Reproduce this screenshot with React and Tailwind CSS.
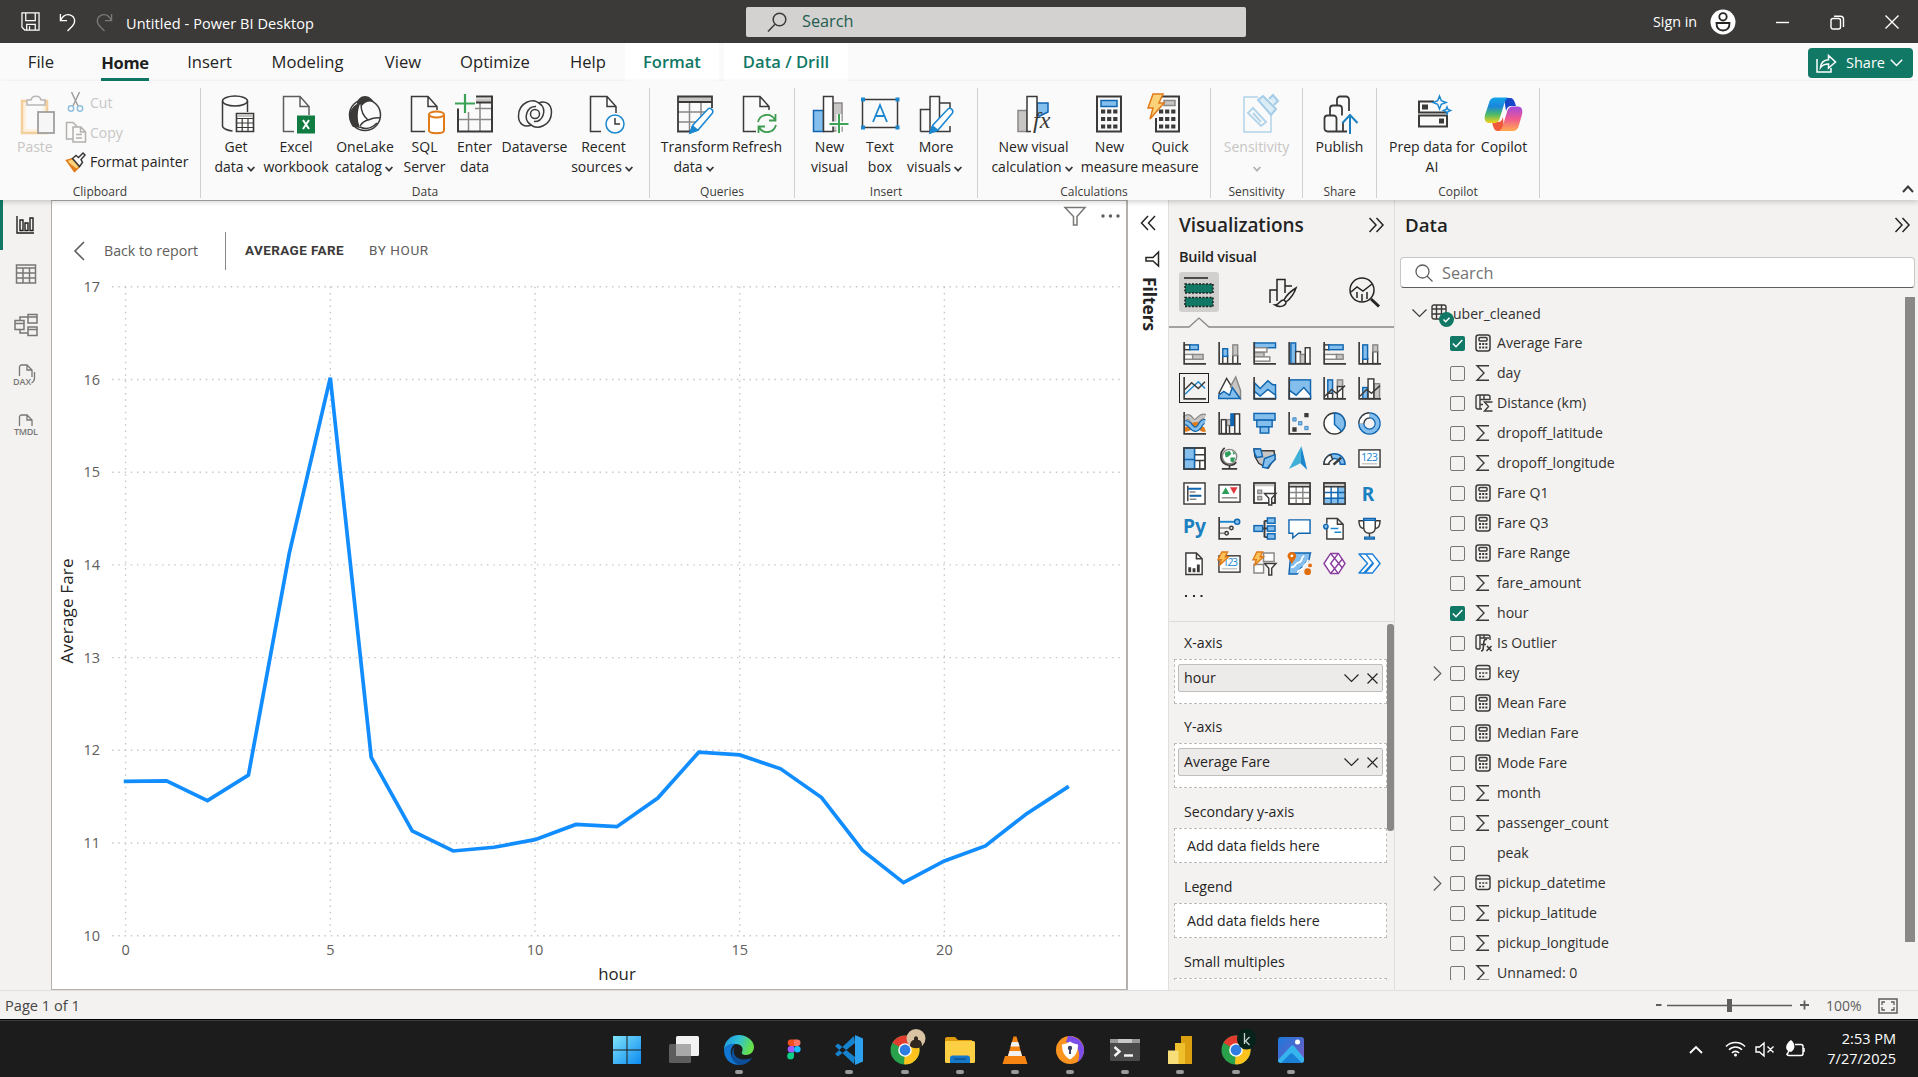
import React from "react";

const K = "#3b3a39";
const B = "#1066b0";
const F = "#83beec";
const G = "#c8c6c4";
const GS = "#8a8886";

function Svg({ w, h, vb, children, className = "", fill = "none", stroke = K, sw = 1.5 }) {
  return (
    <svg width={w} height={h} viewBox={vb || `0 0 ${w} ${h}`} fill={fill} stroke={stroke} strokeWidth={sw} className={`shrink-0 overflow-visible ${className}`}>
      {children}
    </svg>
  );
}

/* ---------- Title bar ---------- */
function TitleBar() {
  return (
    <div className="flex h-[43px] items-center bg-[#3b3a39] text-white">
      <div className="flex w-[746px] items-center">
        <Svg w={19} h={19} vb="0 0 20 20" stroke="#fff" sw={1.3} className="ml-[21px]">
          <path d="M1 1h18v18H4l-3-3zM5 1v8h10V1M6 19v-6h9v6M9 15v4" />
        </Svg>
        <Svg w={17} h={19} vb="0 0 18 20" stroke="#fff" sw={1.4} className="ml-[19px]">
          <path d="M1.500 2v7h7M1.500 9C4 4 8 2 11.500 3c6 2 6.500 8 2.500 12l-5 5" />
        </Svg>
        <Svg w={17} h={19} vb="0 0 18 20" stroke="#7b7977" sw={1.4} className="ml-[20px]">
          <path d="M16.500 2v7h-7M16.500 9C14 4 10 2 6.500 3c-6 2-6.500 8-2.500 12l5 5" />
        </Svg>
        <span className="mt-[5px] ml-[13px] text-[14.500px] tracking-[0.005em] whitespace-nowrap">Untitled - Power BI Desktop</span>
      </div>
      <div className="flex h-[30px] w-[500px] items-center rounded-[2px] bg-[#d3d2d0]">
        <Svg w={20} h={20} stroke={K} sw={1.5} className="ml-[21px]">
          <circle cx="12.500" cy="7.500" r="6.300" />
          <path d="M8 12.200L1 19.500" />
        </Svg>
        <span className="ml-[15px] text-[16.300px] text-[#235c4f]">Search</span>
      </div>
      <span className="ml-[407px] w-[46px] text-[14.300px] whitespace-nowrap">Sign in</span>
      <Svg w={26} h={26} stroke="#252423" sw={1.8} className="ml-[11px]">
        <circle cx="13" cy="13" r="12.500" fill="#fff" stroke="none" />
        <circle cx="13" cy="7.800" r="3.700" />
        <path d="M6.500 14h13c0 5-2.500 7.500-6.500 7.500S6.500 19 6.500 14z" />
      </Svg>
      <Svg w={14} h={14} stroke="#fff" sw={1.4} className="ml-[40px]">
        <path d="M0 7.500h13" />
      </Svg>
      <Svg w={15} h={15} stroke="#fff" sw={1.4} className="mt-[1px] ml-[40px]">
        <rect x="1" y="3.500" width="9.500" height="10.500" rx="2" />
        <path d="M4 1.200h6.500a3 3 0 0 1 3 3V12" />
      </Svg>
      <Svg w={14} h={14} stroke="#fff" sw={1.4} className="mt-[1px] ml-[40px]">
        <path d="M.5.500l13 13M13.500.500l-13 13" />
      </Svg>
    </div>
  );
}

/* ---------- Tabs ---------- */
function Tab({ w, children, active }) {
  return (
    <div className={`flex h-[38px] items-center justify-center ${w}`}>
      <span
        className={
          active
            ? "h-[38px] border-b-[3px] border-[#117865] pt-[1px] text-[16.500px] leading-[38px] font-bold tracking-[-0.02em] text-[#201f1e]"
            : "pt-[1px] text-[16.600px] text-[#252423]"
        }
      >
        {children}
      </span>
    </div>
  );
}

function Tabs() {
  return (
    <div className="flex h-[38px] bg-[#fafafa] pl-[3px]">
      <Tab w="w-[76px]">File</Tab>
      <Tab w="w-[92px]" active>Home</Tab>
      <Tab w="w-[77px]">Insert</Tab>
      <Tab w="w-[119px]">Modeling</Tab>
      <Tab w="w-[72px]">View</Tab>
      <Tab w="w-[112px]">Optimize</Tab>
      <Tab w="w-[74px]">Help</Tab>
      <div className="flex w-[94px] items-center justify-center bg-white pt-[1px] text-[16.500px] font-semibold text-[#117865]">Format</div>
      <div className="ml-[5px] flex w-[124px] items-center justify-center bg-white pt-[1px] text-[16.600px] font-semibold whitespace-nowrap text-[#117865]">
        Data / Drill
      </div>
      <div className="mt-[5px] mr-[5px] ml-auto flex h-[30px] w-[105px] items-center rounded-[4px] bg-[#117865] text-[14.500px] text-white">
        <Svg w={21} h={20} stroke="#fff" sw={1.5} className="ml-[8px]">
          <path d="M1 6v13h14v-4M4.500 14.500c.5-5 3-7.500 8-7.700V2.500l7 6.500-7 6V11c-4 0-6 .8-8 3.500z" />
        </Svg>
        <span className="ml-[9px]">Share</span>
        <Svg w={13} h={8} stroke="#fff" sw={1.500} className="ml-[5px]">
          <path d="M.8.800l5.700 5.700L12.200.800" />
        </Svg>
      </div>
    </div>
  );
}

/* ---------- Ribbon icons (40 x 40) ---------- */
const Pencil = ({ dx = 0, dy = 0 }) => (
  <g transform={`translate(${dx} ${dy})`}>
    <path d="M2 27l3-8L20 3c2-2 6 1 4.500 4L10 24z" fill="#fff" stroke="#1b87d0" />
    <path d="M2 27l2.500-7 5 4z" fill="#1b87d0" stroke="#1b87d0" />
  </g>
);

const ribbonIcons = {
  getData: (
    <>
      <ellipse cx="16" cy="7" rx="12.500" ry="5" />
      <path d="M3.500 7v25c0 2.500 5 4.500 10 5M28.500 7v11" />
      <path d="M17.500 19.500h17v18h-17z" fill="#fff" />
      <path d="M17.500 21.500h17" stroke={G} strokeWidth="3" />
      <path d="M17.500 24.500h17M17.500 29h17M17.500 33.500h17M23.200 24v13.500M29 24v13.500M17.500 19.500h17v18h-17z" strokeWidth="1.200" />
    </>
  ),
  excel: (
    <>
      <path d="M17 37.500H6.500v-35H23l9 10V21M23 2.500v10h9" stroke="#605e5c" />
      <rect x="20" y="21.500" width="18" height="18" fill="#107c41" stroke="none" />
      <path d="M26 26l6 9M32 26l-6 9" stroke="#fff" strokeWidth="2" />
    </>
  ),
  onelake: (
    <>
      <circle cx="20" cy="21" r="15.500" />
      <path d="M8 33C1 23 5 14 12 10c0-5 4-8 8-8s7 3 9 6c-6-2-12 1-14 8-2 6-2 12 0 18z" fill={K} stroke="none" />
      <path d="M15 10c3 0 7 13 8 17-3 0-6 3-8 6-3-6-3-16 0-23z" fill="#fff" stroke="none" />
      <path d="M16 10c0 8 2 12 7 16-5 1-6 3-8 6M23 26c5-2 8-3 12-2M15 33c6 3 12 1 17-4" />
    </>
  ),
  sql: (
    <>
      <path d="M20 37.500H6.500v-35H23l9 10V16M23 2.500v10h9" />
      <path d="M24 20.500v16c0 3.500 15 3.500 15 0v-16" fill="#fff" stroke="#e07b1a" strokeWidth="2" />
      <ellipse cx="31.500" cy="20.500" rx="7.500" ry="3" fill="#fff" stroke="#e07b1a" strokeWidth="2" />
    </>
  ),
  enter: (
    <>
      <path d="M21 4.500h16v4H21z" fill={G} stroke="none" />
      <path d="M14 25.500h23M2 25.500h12M20 14.500h17M13.500 18v19.500M25 8.500v29" stroke={GS} strokeWidth="1.500" />
      <path d="M21 2.500h16v35H3v-23M21 8.500h16" strokeWidth="2" />
      <path d="M10 0v19M0 9.500h20" stroke="#fafafa" strokeWidth="5" />
      <path d="M10 0v19M0 9.500h20" stroke="#3aa356" strokeWidth="2.200" />
    </>
  ),
  dataverse: (
    <>
      <path d="M26 11C18 2 3.500 9 3.500 22c0 8 6 12 13 9M14.500 30C8 24 12 12 21 12.500" />
      <path d="M26 11C18 2 3.500 9 3.500 22c0 8 6 12 13 9M14.500 30C8 24 12 12 21 12.500" transform="rotate(180 20 20)" />
      <circle cx="20" cy="20" r="4.500" />
    </>
  ),
  recent: (
    <>
      <path d="M17 37.500H6.500v-35H23l9 10V19M23 2.500v10h9" />
      <circle cx="31" cy="30" r="9" fill="#fff" stroke="#1b87d0" />
      <path d="M31 24v6h5" />
    </>
  ),
  transform: (
    <>
      <path d="M3 3h34v5H3z" fill={G} stroke="none" />
      <path d="M14.500 8v30M26 8v18M3 18h28M3 28h18" stroke={GS} />
      <path d="M37 14V2.500H3v35h14M3 8h34" strokeWidth="1.800" />
      <Pencil dx={13} dy={12} />
    </>
  ),
  refresh: (
    <>
      <path d="M19 37.500H6.500v-35H23l9 10V16M23 2.500v10h9" />
      <path d="M21 28c2-8 13-10 17-2M38.500 20v6.500H32M39 31c-2 8-13 10-17 2M21.500 39v-6.500H28" stroke="#3f9d52" strokeWidth="1.800" />
    </>
  ),
  newVisual: (
    <>
      <path d="M2.500 16.500h10v21h-10z" fill={F} stroke={B} />
      <path d="M22 9h9v28h-9z" fill={G} stroke={GS} />
      <path d="M12.500 2.500H22v35h-9.500z" fill="#fff" />
      <path d="M28 20v20M18 30h20" stroke="#fafafa" strokeWidth="5" />
      <path d="M28 20v19M18.500 30h19" stroke="#3aa356" strokeWidth="2" />
    </>
  ),
  textBox: (
    <>
      <rect x="2.500" y="5.500" width="35" height="28" />
      <path d="M13 28l7-17 7 17M15 22h10" stroke="#1b87d0" strokeWidth="1.800" />
      <path d="M1 3.500h4v4H1zM35.500 3.500h4v4h-4zM1 31.500h4v4H1zM35.500 31.500h4v4h-4z" fill="#1b87d0" stroke="none" />
    </>
  ),
  moreVisuals: (
    <>
      <path d="M1.500 37.500v-22h9M11 37.500v-35h9.500v24M21 9h10v6M31 32v5.500H1.500" />
      <Pencil dx={9} dy={12} />
    </>
  ),
  newCalc: (
    <>
      <path d="M4 16.500h9v21H4z" fill={G} stroke={GS} />
      <path d="M23 9h11v9l-8 4h-3z" fill={F} stroke={B} />
      <path d="M13 2.500h10v20l-6 15h-4z" fill="#fff" stroke="none" />
      <path d="M17 37.500h-4v-35h10V22" />
      <text x="19" y="34" fontSize="24" fontStyle="italic" fill={K} stroke="none" className="font-['Liberation_Serif']">fx</text>
    </>
  ),
  newMeasure: (
    <>
      <rect x="8" y="2.500" width="24" height="35" strokeWidth="2" />
      <rect x="12" y="6.500" width="16" height="6" fill={F} stroke={B} />
      <path d="M12 17.500h16.500M12 25h16.500M12 32.500h16.500" strokeWidth="4" strokeDasharray="4.200 1.900" />
    </>
  ),
  quick: (
    <>
      <path d="M14 2.500h18v35H9V24" strokeWidth="2" />
      <rect x="17" y="6.500" width="11" height="5" fill={G} stroke={GS} />
      <path d="M12 17.500h16.500M12 25h16.500M12 32.500h16.500" strokeWidth="4" strokeDasharray="4.200 1.900" />
      <path d="M6 0h10l-4 9h5L3 25l3-11H1z" fill="#fbd27a" stroke="#e07b1a" />
    </>
  ),
  sensitivity: (
    <>
      <path d="M20 3H6v35h27V20" stroke="#b3d4ea" />
      <path d="M10 19l5-5 13 14-5 4zM15 19l8 9" stroke="#b3d4ea" strokeWidth="2" />
      <path d="M20 6l5-4 13 13-5 6zM31 5l4-4 5 6-4 4" fill="#dcecf7" stroke="#a5cce6" strokeWidth="2" />
    </>
  ),
  publish: (
    <>
      <path d="M3.500 34.500v-10a3 3 0 0 1 3-3h6a3 3 0 0 1 3 3v13h-9a3 3 0 0 1-3-3zM9 21v-6.500a3 3 0 0 1 3-3h6a3 3 0 0 1 3 3v7M16 11V5.500a3 3 0 0 1 3-3h6a3 3 0 0 1 3 3V17M15 37.500h11M22 28v9" strokeWidth="1.800" />
      <path d="M29 40V21M21.500 29l7.500-8 7.500 8" stroke="#1b80bf" strokeWidth="2" />
    </>
  ),
  prep: (
    <>
      <path d="M21 7.500H6v11h28M6 21.500h28v11H6z" strokeWidth="2" />
      <path d="M9 10.500h6v5H9zM26 24.500h5v5h-5z" fill={K} stroke="none" />
      <path d="M26.500 2l1.800 4.700L33 8.500l-4.700 1.800-1.800 4.700-1.800-4.700L20 8.500l4.700-1.800zM34 13l1 2.500 2.500 1-2.500 1-1 2.500-1-2.500-2.500-1 2.500-1z" fill="#fafafa" stroke="#1b87d0" />
    </>
  ),
  copilot: (
    <>
      <defs>
        <linearGradient id="cpA" x1="0" y1="0" x2="0" y2="1">
          <stop offset="0" stopColor="#12a5e8" />
          <stop offset=".35" stopColor="#1a86dd" />
          <stop offset=".65" stopColor="#48b86a" />
          <stop offset="1" stopColor="#f2d31b" />
        </linearGradient>
        <linearGradient id="cpB" x1="0" y1="0" x2="0" y2="1">
          <stop offset="0" stopColor="#a24be0" />
          <stop offset=".5" stopColor="#f0598f" />
          <stop offset="1" stopColor="#ffab4d" />
        </linearGradient>
      </defs>
      <path d="M20 4h6c3 0 4 2 5 5l1 3h-4c-4 0-5 2-6 5z" fill="#1846c8" stroke="none" />
      <path d="M20 37h-6c-3 0-4-2-5-5l-1-4h6c3 0 4-2 5-5z" fill="#ef5a3c" stroke="none" />
      <path d="M12 3.500h12c-2 1-3 3-4 7l-4 13c-1 4-3 5.500-6 5.500H5c-4 0-5-4-4-8L5 9c1-4 3-5.500 7-5.500z" fill="url(#cpA)" stroke="none" />
      <path d="M28 37H15c2-1 3-3 4-6l4-13c1-4 3-5.500 6-5.500h5c4 0 5 4 4 8L35 31c-1 4-3 6-7 6z" fill="url(#cpB)" stroke="none" />
    </>
  ),
};

function Chev({ color = K }) {
  return (
    <Svg w={8} h={6} stroke={color} sw={1.800} className="mt-[3px] ml-[3px]">
      <path d="M.6 1l3.400 3.700L7.400 1" />
    </Svg>
  );
}

function RibbonButton({ w, icon, a, b, chev, disabled, iconShift = "", shiftB = "" }) {
  return (
    <div className={`flex shrink-0 flex-col items-center ${w}`}>
      <Svg w={40} h={40} className={`mb-[3px] ${iconShift}`}>{ribbonIcons[icon]}</Svg>
      <span className={`text-[14px] leading-[20px] whitespace-nowrap ${disabled ? "text-[#c8c6c4]" : "text-[#252423]"}`}>{a}</span>
      <span className={`flex h-[20px] items-center text-[14px] leading-[20px] whitespace-nowrap text-[#252423] ${shiftB}`}>
        {b}
        {chev && <Chev color={disabled ? "#b5b3b1" : K} />}
      </span>
    </div>
  );
}

function Group({ w, label, children }) {
  return (
    <div className={`mt-[7px] flex h-[110px] shrink-0 flex-col border-r border-[#d2d0ce] ${w}`}>
      <div className="flex h-[94px] pt-[6px]">{children}</div>
      <div className="h-[16px] text-center text-[12px] leading-[20px] text-[#3b3a39]">{label}</div>
    </div>
  );
}

function Ribbon() {
  return (
    <div className="relative z-10 flex h-[119px] bg-[#fafafa] shadow-[0_2px_5px_rgba(0,0,0,0.18)]">
      <Group w="w-[201px]" label="Clipboard">
        <div className="flex w-[64px] flex-col pl-[17px]">
          <Svg w={40} h={40} className="mb-[3px] ml-[2px]">
            <rect x="3" y="7" width="25" height="32" fill="#fdf1de" stroke="#f3cf9c" strokeWidth="2.500" />
            <rect x="7" y="11" width="17" height="24" fill="#fafafa" stroke="none" />
            <path d="M8 11V6h4c1-5 9-5 10 0h4v5z" fill="#fafafa" stroke="#bab8b6" />
            <rect x="19" y="18" width="16" height="21" fill="#f6f6f6" stroke="#a19f9d" strokeWidth="1.800" />
          </Svg>
          <span className="text-[14px] leading-[20px] text-[#c8c6c4]">Paste</span>
        </div>
        <div className="-mt-[7px] flex flex-col text-[14px] text-[#c8c6c4]">
          <div className="flex h-[30px] items-center">
            <Svg w={20} h={20} stroke="#a19f9d" className="mr-[5px] ml-[1px]">
              <path d="M6.500 0l6.500 14M14.500 0L8 14" />
              <circle cx="6" cy="16.500" r="2.700" stroke="#8fc0e0" />
              <circle cx="15" cy="16.500" r="2.700" stroke="#8fc0e0" />
            </Svg>
            Cut
          </div>
          <div className="flex h-[30px] items-center">
            <Svg w={22} h={22} stroke="#b3b0ad" className="mr-[3px] ml-[1px]">
              <path d="M8 18H1.500V1.500H8l4 4M8 6h8l4.500 5v10H8zM15.500 6v5h5M11 13.500h6M11 17h6" />
            </Svg>
            Copy
          </div>
          <div className="flex h-[30px] items-center text-[#252423]">
            <Svg w={21} h={20} className="mr-[4px] ml-[1px]">
              <path d="M1.500 8.500l6-2 7 8-5 5z" fill="#fbd27a" stroke="#e07b1a" />
              <path d="M3 10l9 7-2.500 2.500z" fill="#e07b1a" stroke="none" />
              <path d="M7.500 6.500L11 3.500l2.500 2L18 1l2 2-4 4.500 1.500 3-3 4z" fill="#fafafa" />
            </Svg>
            <span className="text-[14.100px]">Format painter</span>
          </div>
        </div>
      </Group>
      <Group w="w-[449px]" label="Data">
        <RibbonButton w="ml-[3px] w-[64px]" icon="getData" a="Get" b="data" chev iconShift="ml-[5px]" shiftB="mr-[3px]" />
        <RibbonButton w="w-[56px]" icon="excel" a="Excel" b="workbook" iconShift="ml-[2px]" />
        <RibbonButton w="w-[82px]" icon="onelake" a="OneLake" b="catalog" chev shiftB="mr-[2px]" />
        <RibbonButton w="w-[37px]" icon="sql" a="SQL" b="Server" />
        <RibbonButton w="w-[63px]" icon="enter" a="Enter" b="data" />
        <RibbonButton w="w-[57px]" icon="dataverse" a="Dataverse" />
        <RibbonButton w="w-[81px]" icon="recent" a="Recent" b="sources" chev shiftB="mr-[3px]" />
      </Group>
      <Group w="w-[145px]" label="Queries">
        <RibbonButton w="ml-[2px] w-[86px]" icon="transform" a="Transform" b="data" chev shiftB="mr-[3px]" />
        <RibbonButton w="w-[38px]" icon="refresh" a="Refresh" />
      </Group>
      <Group w="w-[183px]" label="Insert">
        <RibbonButton w="ml-[4px] w-[61px]" icon="newVisual" a="New" b="visual" iconShift="ml-[2px]" />
        <RibbonButton w="w-[40px]" icon="textBox" a="Text" b="box" />
        <RibbonButton w="w-[72px]" icon="moreVisuals" a="More" b="visuals" chev iconShift="ml-[6px]" shiftB="mr-[3px]" />
      </Group>
      <Group w="w-[233px]" label="Calculations">
        <RibbonButton w="ml-[6px] w-[99px]" icon="newCalc" a="New visual" b="calculation" chev shiftB="mr-[3px]" />
        <RibbonButton w="w-[53px]" icon="newMeasure" a="New" b="measure" iconShift="-ml-[2px]" />
        <RibbonButton w="w-[68px]" icon="quick" a="Quick" b="measure" iconShift="-ml-[6px]" />
      </Group>
      <Group w="w-[92px]" label="Sensitivity">
        <RibbonButton w="w-[91px]" icon="sensitivity" a="Sensitivity" b="" chev disabled iconShift="ml-[2px]" shiftB="mr-[3px]" />
      </Group>
      <Group w="w-[74px]" label="Share">
        <RibbonButton w="w-[73px]" icon="publish" a="Publish" iconShift="ml-[3px]" />
      </Group>
      <Group w="w-[163px]" label="Copilot">
        <RibbonButton w="ml-[12px] w-[86px]" icon="prep" a="Prep data for" b="AI" iconShift="ml-[2px]" />
        <RibbonButton w="w-[58px]" icon="copilot" a="Copilot" />
      </Group>
      <Svg w={12} h={8} sw={2} className="mt-[104px] mr-[4px] ml-auto">
        <path d="M1 7l5-5.500L11 7" />
      </Svg>
    </div>
  );
}

/* ---------- Left rail ---------- */
function Rail() {
  return (
    <div className="flex w-[51px] flex-col items-center bg-[#f3f2f1]">
      <div className="flex h-[50px] w-full items-center border-l-[3px] border-[#117865] pl-[13px]">
        <Svg w={18} h={18} stroke="#201f1e" sw={1.400}>
          <path d="M1 0v17h17M4 14.500V4h3v10.500zM9 14.500V7h3v7.500zM14 14.500V2h3v12.500z" />
        </Svg>
      </div>
      <Svg w={22} h={20} stroke="#797775" className="mt-[14px]">
        <path d="M1.500 1h19v18h-19zM1.500 4h19M1.500 9h19M1.500 14h19M8 4v15M14.500 4v15" />
      </Svg>
      <Svg w={24} h={24} stroke="#797775" className="mt-[29px]">
        <path d="M14 1.500h9v8.500h-9zM14 4h9M14 14h9v8.500h-9zM14 16.500h9M1 7.500h9v9H1zM1 10.500h9M6 7.500V4h8M6 16.500V20h8" />
      </Svg>
      <Svg w={24} h={24} stroke="#797775" sw={1.300} className="mt-[26px]">
        <path d="M5.500 13V4a2 2 0 0 1 2-2H13l5 5v7M13 2v5h5M20.500 9v6c0 3-1 4-3 5" />
        <text x="-1" y="22" fontSize="9" fontWeight="600" fill="#797775" stroke="none">DAX</text>
      </Svg>
      <Svg w={24} h={24} stroke="#797775" sw={1.300} className="mt-[26px]">
        <path d="M5.500 13V4a2 2 0 0 1 2-2H13l5 5v6M13 2v5h5" />
        <text x="0" y="22" fontSize="9" fontWeight="600" fill="#797775" stroke="none" textLength="24">TMDL</text>
      </Svg>
    </div>
  );
}

/* ---------- Chart ---------- */
const values = [
  11.666, 11.67, 11.457, 11.733, 14.13, 16.02, 11.924, 11.13, 10.914, 10.954, 11.036, 11.2, 11.176, 11.485, 11.98, 11.95, 11.8,
  11.49, 10.92, 10.572, 10.806, 10.968, 11.313, 11.6,
];
const px = (h) => 73.6 + h * 40.94;
const py = (v) => 663.7 - (v - 10) * 92.7;

function Chart() {
  return (
    <svg width="1074" height="717" viewBox="0 0 1074 717" fill="none" className="block shrink-0">
      {[10, 11, 12, 13, 14, 15, 16, 17].map((v) => (
        <g key={v}>
          <path d={`M60 ${py(v)}H1068`} stroke="#c9c7c5" strokeWidth="1.400" strokeDasharray="1.500 4.750" />
          <text x="48" y={py(v) + 5} textAnchor="end" fontSize="14.500" fill="#605e5c">{v}</text>
        </g>
      ))}
      {[0, 5, 10, 15, 20].map((h) => (
        <g key={h}>
          <path d={`M${px(h)} ${py(17)}V${py(10)}`} stroke="#c9c7c5" strokeWidth="1.400" strokeDasharray="1.500 4.750" />
          <text x={px(h)} y={py(10) + 19} textAnchor="middle" fontSize="14.500" fill="#605e5c">{h}</text>
        </g>
      ))}
      <polyline points={values.map((v, h) => `${px(h)},${py(v)}`).join(" ")} stroke="#118dff" strokeWidth="3.700" strokeLinejoin="miter" strokeLinecap="square" />
      <text x="565" y="708" textAnchor="middle" fontSize="16.800" fill="#252423">hour</text>
      <text transform="translate(20.500 391.500) rotate(-90)" fontSize="17" fill="#252423" textLength="105">Average Fare</text>
    </svg>
  );
}

function Canvas() {
  return (
    <div className="flex w-[1077px] flex-col border border-r-2 border-[#b3b0ad] bg-white">
      <div className="flex h-[24px] items-end justify-end">
        <Svg w={22} h={20} stroke="#797775" className="mr-[15px] mb-[-1px]">
          <path d="M1 1.500h20l-8 9V19H9.500v-8.500z" />
        </Svg>
        <Svg w={19} h={4} fill="#605e5c" stroke="none" className="mr-[6px] mb-[7px]">
          <circle cx="2" cy="2" r="1.700" />
          <circle cx="9.500" cy="2" r="1.700" />
          <circle cx="17" cy="2" r="1.700" />
        </Svg>
      </div>
      <div className="flex h-[47px] items-center pt-[4px]">
        <Svg w={12} h={20} stroke="#605e5c" sw={1.600} className="ml-[21px]">
          <path d="M11 1L2 10l9 9" />
        </Svg>
        <span className="ml-[19px] w-[94px] text-[14.200px] whitespace-nowrap text-[#605e5c]">Back to report</span>
        <div className="ml-[27px] h-[38px] w-px bg-[#8a8886]" />
        <span className="ml-[19px] w-[100px] font-['Roboto'] text-[13.500px] font-bold tracking-[0.03em] whitespace-nowrap text-[#3b3a39]">AVERAGE FARE</span>
        <span className="ml-[24px] font-['Roboto'] text-[13.500px] tracking-[0.045em] whitespace-nowrap text-[#605e5c]">BY HOUR</span>
      </div>
      <Chart />
    </div>
  );
}

/* ---------- Filters strip ---------- */
function Filters() {
  return (
    <div className="flex w-[41px] flex-col items-center border-r border-[#e1dfdd] bg-white">
      <Svg w={17} h={16} stroke="#252423" className="mt-[15px]">
        <path d="M8 1L1.500 8 8 15M15 1L8.500 8l6.500 7" />
      </Svg>
      <Svg w={15} h={16} stroke="#252423" className="mt-[20px] ml-[8px]">
        <path d="M13.500 1v14L8 10H1V6.500h7z" />
      </Svg>
      <span className="mt-[10px] ml-[2px] text-[17.300px] leading-[20px] font-bold text-[#252423] [writing-mode:vertical-rl]">Filters</span>
    </div>
  );
}

/* ---------- Visual icons (24 x 24) ---------- */
const Ax = () => <path d="M1.200 0v22.800H24" strokeWidth="1.700" />;
const Bolt = () => <path d="M4 0h6L7.500 5H11L1.500 14l2-6H0z" fill="#fbc25a" stroke="#e07b1a" />;
const wht = { fill: "#fff" };
const blu = { fill: F, stroke: B };
const gry = { fill: G, stroke: GS };

const visuals = [
  <><rect x="1.500" y="3" width="6" height="5" {...wht} /><rect x="7" y="3" width="9" height="5" {...blu} /><rect x="1.500" y="13" width="9" height="5" {...wht} stroke={GS} /><rect x="10" y="13" width="11" height="5" {...gry} /><Ax /></>,
  <><rect x="5" y="14" width="5" height="8.500" {...wht} /><rect x="5" y="7" width="5" height="8" {...blu} /><rect x="15.500" y="14" width="5" height="8.500" {...wht} /><rect x="15.500" y="3" width="5" height="11" {...gry} /><Ax /></>,
  <><rect x="1.500" y="1" width="22" height="5" {...blu} /><rect x="1.500" y="6" width="13" height="4.500" {...wht} stroke={GS} /><rect x="1.500" y="11" width="10" height="4.500" {...gry} /><rect x="1.500" y="15.500" width="16" height="4.500" {...wht} stroke={GS} /><Ax /></>,
  <><rect x="3" y="1" width="5" height="21.500" {...blu} /><rect x="8" y="10" width="5" height="12.500" {...wht} /><rect x="13" y="13" width="5" height="9.500" {...gry} /><rect x="18" y="6" width="5" height="16.500" {...wht} /><Ax /></>,
  <><rect x="1.500" y="3" width="5" height="5" {...wht} /><rect x="6" y="3" width="15" height="5" {...blu} /><rect x="1.500" y="13" width="13" height="5" {...wht} stroke={GS} /><rect x="14" y="13" width="7" height="5" {...gry} /><Ax /></>,
  <><rect x="5" y="17" width="5" height="5.500" {...wht} /><rect x="5" y="3" width="5" height="15" {...blu} /><rect x="15.500" y="10" width="5" height="12.500" {...wht} /><rect x="15.500" y="3" width="5" height="7" {...gry} /><Ax /></>,
  <><path d="M2 18L16 5l7 7" stroke="#1b87d0" /><path d="M2 13l7-7 7 6 7-7" /><Ax /></>,
  <><path d="M1 17L9 1.500l8 13-7 8z" {...wht} /><path d="M13 10L18.500 0l5 14v8.500z" {...gry} /><path d="M.8 22.500V19L6 15l6 4 3-8 8 11.500z" {...blu} /></>,
  <><path d="M1.500 6l6 6 8-8 5 4h3v14.500h-22z" {...blu} /><path d="M1.500 15l6 5 8-7 8 6v3.500h-22z" {...wht} stroke={B} /><Ax /></>,
  <><rect x="1.500" y="3" width="22" height="19.500" {...blu} /><path d="M1.500 14l7 5 8-8 7 8v3.500h-22z" {...wht} stroke={B} /><Ax /></>,
  <><rect x="5" y="3" width="5" height="15" {...blu} /><rect x="15" y="3" width="5.500" height="7" {...gry} /><rect x="5" y="17" width="5" height="5.500" {...wht} /><rect x="15" y="10" width="5.500" height="12.500" {...wht} /><path d="M2 20l7-7 5 4 9-8" /><Ax /></>,
  <><rect x="5" y="11" width="5" height="11.500" {...blu} /><rect x="17" y="7" width="5.500" height="15.500" {...gry} /><rect x="10.500" y="2" width="6" height="20.500" {...wht} /><path d="M2 20l7-7 5 4 9-8" /><Ax /></>,
  <><path d="M2 7c6-6 6 5 11 3s5-7 10-5" stroke={GS} strokeWidth="6" /><path d="M2 7c6-6 6 5 11 3s5-7 10-5" stroke={G} strokeWidth="3.500" /><path d="M2 18c7 0 6-5 11-5s5 7 10 5" stroke="#e07b1a" strokeWidth="5" /><path d="M2 11c6 0 6 7 11 7s5-9 10-8" stroke={B} strokeWidth="5.500" /><path d="M2 11c6 0 6 7 11 7s5-9 10-8" stroke={F} strokeWidth="3" /><Ax /></>,
  <><rect x="3.500" y="8" width="5" height="14.500" {...wht} /><rect x="9" y="8" width="5" height="6" {...gry} /><rect x="13.500" y="2" width="3.500" height="12" fill={B} stroke={B} /><rect x="17.500" y="2" width="5" height="20.500" {...wht} /><path d="M8.500 8v14.500M12 14v8.500" /><Ax /></>,
  <><rect x="1" y="1.500" width="22" height="7" {...blu} /><rect x="4" y="8.500" width="16" height="7" {...blu} /><rect x="7.500" y="15.500" width="9" height="6.500" {...blu} /></>,
  <><path d="M17 1h4.500v4.500H17zM4.500 16H9v4.500H4.500z" fill={K} stroke="none" /><path d="M5 6h3.500v3.500H5zM11 10h3.500v3.500H11zM17.500 15H21v3.500h-3.500z" {...blu} strokeWidth=".7" /><Ax /></>,
  <><circle cx="12" cy="12" r="11" {...wht} /><path d="M12 1a11 11 0 0 1 7.500 19L12 13z" {...blu} /></>,
  <><circle cx="12" cy="12" r="8.500" stroke={B} strokeWidth="6.500" /><circle cx="12" cy="12" r="8.500" stroke={F} strokeWidth="4" /><path d="M12 3.500A8.500 8.500 0 0 0 3.500 12" stroke={K} strokeWidth="6.500" /><path d="M12 3.500A8.500 8.500 0 0 0 3.500 12" stroke="#fff" strokeWidth="4" /></>,
  <><rect x="1" y="1" width="22" height="22" {...wht} /><path d="M12 1v22M12 8h11M12 14h11M17.500 14v9" /><path d="M1 1h11v22H1zM1 13h11" {...blu} /><path d="M1 1h22v22H1z" fill="none" /></>,
  <><circle cx="12" cy="10" r="7.500" {...wht} stroke={GS} /><path d="M7 6l5-2 2 3-3 3-3 1zM13 11l5 0-2 5-3-1zM15 4l3 3-2 1z" fill="#2f9e5a" stroke="none" /><path d="M7 1C1 6 2 15 8 18c4 2 9 1 11-2M12 19v3M4 22.800h16" strokeWidth="1.800" /></>,
  <><path d="M1 2h5l2 2h14l1 9-4 4-3 5-5-2-5-3-4-7z" {...gry} stroke={K} /><path d="M1 2h7l2 8-6 1c-2-3-3-6-3-9zM12 12l11-4v5l-5 5-3 4-5-1z" {...blu} /></>,
  <><path d="M14 -1L1 23l12-6z" fill="#3fb0d8" stroke="none" /><path d="M14 -1l6 25-7-7z" fill="#1b86cc" stroke="none" /></>,
  <><path d="M1 18a11 11 0 0 1 22 0h-5a6 6 0 0 0-12 0z" {...blu} /><path d="M1 18A11 11 0 0 1 8 8l2 5c-2 1-4 3-4 5z" {...wht} /><path d="M11 18.500L19 11" strokeWidth="2.500" /></>,
  <><rect x="1" y="3" width="22" height="18" {...wht} /><path d="M4 17.500h16" stroke={G} /><text x="3" y="14.500" fontSize="11.500" fill="#1b87d0" stroke="none" textLength="18">123</text></>,
  <><rect x="1" y="1" width="22" height="22" {...wht} /><path d="M5 4v16M7 14h12" /><path d="M5 7h14M7 14.500h12" stroke={B} strokeWidth="2" /><path d="M7 10.500h6M7 18h7" stroke={GS} /></>,
  <><rect x="1" y="3" width="22" height="18" {...wht} /><path d="M4 16.500h16" stroke={GS} /><path d="M4 12.500l4-7 4 7z" fill="#2f9e5a" stroke="none" /><path d="M12.500 5.500h8l-4 7z" fill="#e0383e" stroke="none" /></>,
  <><rect x="1" y="1" width="22" height="21" {...wht} /><path d="M1 3h22" stroke={G} strokeWidth="3" /><path d="M1 1h22v21H1z" /><path d="M5 8.500h4V12H5zM5 15h4v3.500H5z" {...gry} /><path d="M12 12h12l-4.500 5v7h-3v-7z" {...wht} /></>,
  <><rect x="1" y="1" width="22" height="22" {...wht} /><path d="M1 3h22" stroke={G} strokeWidth="4" /><path d="M1 11h22M1 17h22M8.500 5v18M15.500 5v18" stroke={GS} /><path d="M1 5h22M1 1h22v22H1z" /></>,
  <><rect x="1" y="1" width="22" height="22" {...wht} /><path d="M15.500 5H23v18H1v-6h14.500z" fill={F} stroke="none" /><path d="M1 11h22M1 17h22M8.500 5v18M15.500 5v18" stroke={B} /><path d="M1 3h22" stroke={G} strokeWidth="3" /><path d="M1 5h22M1 1h22v22H1z" /></>,
  <text x="4" y="19.500" fontSize="21" fontWeight="700" fill="#1b80bf" stroke="none" className="font-['Noto_Sans']" textLength="13" lengthAdjust="spacingAndGlyphs">R</text>,
  <text x="0" y="17" fontSize="20" fontWeight="700" fill="#1b80bf" stroke="none" className="font-['Noto_Sans']" textLength="24" lengthAdjust="spacingAndGlyphs">Py</text>,
  <><path d="M2 5h16" stroke="#1b87d0" strokeWidth="2" /><circle cx="20" cy="5" r="2.700" {...blu} /><path d="M2 11.500h10M2 17h5" stroke={GS} /><circle cx="14" cy="11.500" r="1.800" /><circle cx="9" cy="17" r="1.800" /><Ax /></>,
  <><path d="M9 12h6M12 4v17M12 4h3M12 21h3" strokeWidth="2" /><rect x="1" y="9" width="9" height="6" {...blu} /><rect x="15" y="1" width="8" height="5.500" {...blu} /><rect x="15" y="9.300" width="8" height="5.500" {...blu} /><rect x="15" y="17.500" width="8" height="5.500" {...blu} /></>,
  <path d="M1 3h22v14H11l-6 5v-5H1z" {...wht} stroke={B} />,
  <><path d="M4 7V1.500h11l6 6V23H4V12M15 1.500v6h6" {...wht} /><circle cx="3" cy="10" r="2.300" {...blu} /><path d="M8 12h8M12 16h7" stroke="#1b87d0" /></>,
  <><path d="M6 2h12v9c0 5-3 6-6 6s-6-1-6-6zM6 4H1c0 5 1 8 5 8M18 4h5c0 5-1 8-5 8M12 17v4" {...wht} /><path d="M6 1.500h12v2H6zM7 21h10v2H7z" {...blu} /></>,
  <><path d="M3 1h11l6 6v16.500H3zM14 1v6h6" {...wht} /><path d="M7 21v-5M11.500 21v-4M16 21v-8" strokeWidth="3" /></>,
  <><rect x="1" y="4" width="22" height="17" {...wht} /><path d="M4 17.500h16" stroke={G} /><text x="5" y="15" fontSize="11" fill="#1b87d0" stroke="none" textLength="16">123</text><Bolt /></>,
  <><path d="M11 1h11v9H11zM1 13h10v9H1z" {...wht} stroke={GS} /><path d="M12 12h12l-4.500 5v7h-3v-7z" {...wht} /><Bolt /></>,
  <><path d="M3 1h20.500c-2 5 0 7-3 9-4 1-2 5-6 6-3 1-2 4-5 7H1z" {...blu} /><path d="M3 16c6 0 3-4 8-5s2-6 6-7M10 22c0-4 4-2 6-6 1-4 5-4 5-8" stroke="#fff" strokeWidth="1.800" /><path d="M-.5 4c0-5.500 9-5.500 9 0 0 3-3 5-4.500 9C3 9-.5 7-.5 4z" fill="#e06c0a" stroke="none" /><circle cx="4" cy="4" r="1.500" fill="#fff" stroke="none" /><circle cx="20.500" cy="20.500" r="3.500" fill="#e06c0a" stroke="none" /><circle cx="23" cy="14" r="2" fill="#e06c0a" stroke="none" /></>,
  <><path d="M8 1.500h8L23 12l-7 10.500H8L1 12z" {...wht} stroke="#8b3fa0" strokeLinejoin="round" /><path d="M8 1.500L20 16.500M16 1.500L8 12l8 10.500M20 7.500L8 22.500" stroke="#8b3fa0" /></>,
  <><path d="M1 2h14l8 10-8 10H1l9-10z" {...wht} stroke="#1b7fd6" strokeLinejoin="round" /><path d="M8 2l8 10-8.500 10M15 12L6 22" stroke="#1b7fd6" /></>,
];

function FieldWell({ label, top, field, drop, height }) {
  return (
    <div className={top}>
      <div className="h-[20px] pl-[10px] text-[14.200px] leading-[20px]">{label}</div>
      <div className={`mt-[6px] border border-dashed border-[#bebbb8] bg-white ${height}`}>
        {field ? (
          <div className="mt-[4px] ml-[3px] flex h-[28px] w-[205px] items-center rounded-[2px] border border-[#c0bebc] bg-[#edebe9] pl-[5px] text-[14.200px]">
            {field}
            <Svg w={15} h={8} stroke="#252423" sw={1.200} className="ml-auto">
              <path d="M.5.500l7 7 7-7" />
            </Svg>
            <Svg w={11} h={11} stroke="#252423" sw={1.200} className="mr-[4px] ml-[8px]">
              <path d="M.5.500l10 10M10.500.500l-10 10" />
            </Svg>
          </div>
        ) : (
          drop && <div className="pl-[12px] text-[14.200px] leading-[33px]">Add data fields here</div>
        )}
      </div>
    </div>
  );
}

function Visualizations() {
  return (
    <div className="flex w-[226px] flex-col overflow-hidden border-r border-[#e1dfdd] bg-[#f3f2f1] text-[#252423]">
      <div className="mt-[11px] flex h-[28px] items-center justify-between pr-[9px] pl-[10px]">
        <span className="text-[19px] font-semibold tracking-[-0.005em]">Visualizations</span>
        <Svg w={17} h={16} stroke="#252423">
          <path d="M1.500 1L8 8l-6.500 7M8.500 1L15 8l-6.500 7" />
        </Svg>
      </div>
      <div className="mt-[8px] h-[20px] pl-[10px] text-[14.500px] leading-[20px] font-semibold tracking-[-0.015em]">Build visual</div>
      <div className="mt-[5px] flex h-[40px] items-center pl-[10px]">
        <div className="flex h-[40px] w-[40px] items-center justify-center rounded-[3px] bg-[#d2d0ce]">
          <Svg w={30} h={30} stroke="#201f1e">
            <path d="M0 1h24" />
            <rect x="1" y="7" width="28" height="9" fill="#117865" strokeDasharray="2 1.500" />
            <rect x="1" y="20.500" width="28" height="9" fill="#117865" strokeDasharray="2 1.500" />
          </Svg>
        </div>
        <Svg w={28} h={29} stroke="#252423" className="ml-[50px]">
          <path d="M1 25V12h7v11M8 13V1.500h8V15M16 8h7" />
          <path d="M27 10c-5 3-10 8-12 12l2 2c4-3 8-8 10-14zM15 22c-4-1-4 5-9 5 5 3 11 1 11-3" fill="#f3f2f1" />
        </Svg>
        <Svg w={31} h={30} stroke="#252423" className="ml-[52px]">
          <circle cx="13" cy="13" r="12" />
          <path d="M2 15l6-5 6 4 9-7M8 21v-6M13 24v-7M18 22v-7" />
          <path d="M22 22l8 7.500" strokeWidth="3" />
        </Svg>
      </div>
      <Svg w={226} h={11} stroke="#8a8886" sw={1.300} className="mt-[5px]">
        <path d="M0 10h20l10-9 10 9h186" />
      </Svg>
      <div className="mt-[8px] ml-[8px] grid auto-rows-[35px] grid-cols-[repeat(6,35px)]">
        {visuals.map((v, i) => (
          <div key={i} className={i === 6 ? "mt-[2px] ml-[2px] flex h-[30px] w-[30px] items-center justify-center border border-[#201f1e]" : "flex h-[35px] w-[35px] items-center justify-center"}>
            <Svg w={23} h={23} vb="0 0 24 24">{v}</Svg>
          </div>
        ))}
      </div>
      <Svg w={20} h={4} fill="#252423" stroke="none" className="mt-[13px] ml-[15px]">
        <path d="M1 1h2v2H1zM9 1h2v2H9zM16.500 1h2v2h-2z" />
      </Svg>
      <div className="mt-[23px] flex h-[359px] overflow-hidden border-t border-[#dedcda]">
        <div className="ml-[5px] w-[213px]">
          <FieldWell label="X-axis" top="mt-[11px]" field="hour" height="h-[45px]" />
          <FieldWell label="Y-axis" top="mt-[13px]" field="Average Fare" height="h-[45px]" />
          <FieldWell label="Secondary y-axis" top="mt-[14px]" drop height="h-[35px]" />
          <FieldWell label="Legend" top="mt-[14px]" drop height="h-[35px]" />
          <FieldWell label="Small multiples" top="mt-[14px]" height="h-[35px]" />
        </div>
        <div className="mt-[2px] h-[207px] w-[7px] rounded-[3px] bg-[#8a8886]" />
      </div>
    </div>
  );
}

/* ---------- Data pane ---------- */
const fieldIcons = {
  calc: (
    <Svg w={17} h={18} stroke={K} sw={1.500}>
      <rect x="1" y="1" width="14" height="16" rx="2.500" />
      <rect x="4" y="3.500" width="8" height="3.500" rx="1" />
      <path d="M4 10h2M7.200 10h2M10.400 10h2M4 13.500h2M7.200 13.500h2M10.400 13.500h2" strokeWidth="2" />
    </Svg>
  ),
  sum: (
    <Svg w={17} h={18} stroke={K} sw={1.400}>
      <path d="M14 1.700H2l7 7.300-7 7.300h12" />
    </Svg>
  ),
  colSum: (
    <Svg w={18} h={18} stroke={K} sw={1.400}>
      <path d="M15 6V3a2 2 0 0 0-2-2H3a2 2 0 0 0-2 2v10a2 2 0 0 0 2 2h4M5 1v14M5 5.500h10M5 10.500h3M9 1v4M17.500 8H9.500l4 4.500-4 4.500h8" />
    </Svg>
  ),
  colFx: (
    <Svg w={18} h={18} stroke={K} sw={1.400}>
      <path d="M15 6V3a2 2 0 0 0-2-2H3a2 2 0 0 0-2 2v10a2 2 0 0 0 2 2h2M5 1v14M5 4h9M9 1v3" />
      <path d="M12 5.500c-2-.5-3 .5-3.200 3l-.6 6c-.2 2-1 2.500-2.200 2.500M6 10.500h5M12 12l4.500 5M16.500 12l-5 5" strokeWidth="1.600" />
    </Svg>
  ),
  date: (
    <Svg w={17} h={18} stroke={K} sw={1.400}>
      <rect x="1" y="1.500" width="14" height="14" rx="2.500" />
      <path d="M1 5h14" />
      <path d="M4 9h2M7.200 9h2M10.400 9h2M4 12.500h2M7.200 12.500h2" strokeWidth="1.700" />
    </Svg>
  ),
};

const fields = [
  ["Average Fare", "calc", true],
  ["day", "sum"],
  ["Distance (km)", "colSum"],
  ["dropoff_latitude", "sum"],
  ["dropoff_longitude", "sum"],
  ["Fare Q1", "calc"],
  ["Fare Q3", "calc"],
  ["Fare Range", "calc"],
  ["fare_amount", "sum"],
  ["hour", "sum", true],
  ["Is Outlier", "colFx"],
  ["key", "date", false, true],
  ["Mean Fare", "calc"],
  ["Median Fare", "calc"],
  ["Mode Fare", "calc"],
  ["month", "sum"],
  ["passenger_count", "sum"],
  ["peak", null],
  ["pickup_datetime", "date", false, true],
  ["pickup_latitude", "sum"],
  ["pickup_longitude", "sum"],
  ["Unnamed: 0", "sum"],
];

function DataPane() {
  return (
    <div className="flex w-[523px] flex-col bg-[#f3f2f1] text-[#323130]">
      <div className="mt-[11px] flex h-[28px] items-center justify-between pr-[7px] pl-[10px] text-[#201f1e]">
        <span className="text-[18.700px] font-semibold">Data</span>
        <Svg w={17} h={16} stroke="#252423">
          <path d="M1.500 1L8 8l-6.500 7M8.500 1L15 8l-6.500 7" />
        </Svg>
      </div>
      <div className="mt-[18px] ml-[5px] flex h-[31px] w-[515px] items-center rounded-[4px] border border-b-[1.500px] border-[#c8c6c4] border-b-[#605e5c] bg-white">
        <Svg w={18} h={18} stroke="#605e5c" sw={1.300} className="ml-[14px]">
          <circle cx="7.500" cy="7.500" r="6.500" />
          <path d="M12 12l5.500 5.500" />
        </Svg>
        <span className="ml-[9px] pt-[1px] text-[16.300px] text-[#757371]">Search</span>
      </div>
      <div className="mt-[9px] flex h-[683px] overflow-hidden">
        <div className="w-[510px] pt-[1px] text-[14px]">
          <div className="flex h-[30px] items-center pl-[17px]">
            <Svg w={15} h={9} stroke={K} sw={1.200}>
              <path d="M.5.500l7 7 7-7" />
            </Svg>
            <div className="relative ml-[4px] h-[18px] w-[18px]">
              <Svg w={17} h={17} stroke={K} sw={1.400}>
                <rect x="1" y="1" width="14" height="14" rx="2" />
                <path d="M1 5h14M1 10h14M5.500 1v14M10.500 1v14" />
              </Svg>
              <Svg w={15} h={15} stroke="none" className="absolute top-[8px] left-[8px]">
                <circle cx="7.500" cy="7.500" r="7.500" fill="#117865" />
                <path d="M4.500 7.500l2.200 2.200 3.800-4" stroke="#fff" strokeWidth="1.500" />
              </Svg>
            </div>
            <span className="ml-[4px]">uber_cleaned</span>
          </div>
          {fields.map(([name, icon, checked, expandable]) => (
            <div key={name} className="flex h-[30px] items-center">
              <div className="flex w-[55px] justify-end pr-[8px]">
                {expandable && (
                  <Svg w={9} h={15} stroke="#605e5c" sw={1.200}>
                    <path d="M.8.500l7 7-7 7" />
                  </Svg>
                )}
              </div>
              {checked ? (
                <div className="flex h-[15px] w-[15px] items-center justify-center rounded-[2px] bg-[#117865]">
                  <Svg w={11} h={9} stroke="#fff" sw={1.500}>
                    <path d="M.8 4.500l3.200 3.200L10.300 1" />
                  </Svg>
                </div>
              ) : (
                <div className="h-[15px] w-[15px] rounded-[2px] border border-[#797775]" />
              )}
              <div className="ml-[10px] w-[22px]">{icon && fieldIcons[icon]}</div>
              <span className="text-[14.100px] whitespace-nowrap">{name}</span>
            </div>
          ))}
        </div>
        <div className="h-[645px] w-[10px] bg-[#8a8886]" />
      </div>
    </div>
  );
}

/* ---------- Status bar ---------- */
function StatusBar() {
  return (
    <div className="flex h-[29px] items-center border-t border-[#e1dfdd] bg-[#f3f2f1] pt-[2px] pl-[5px] text-[14.600px] text-[#484644]">
      <span>Page 1 of 1</span>
      <Svg w={152} h={16} stroke="#605e5c" className="mr-[1px] ml-auto">
        <path d="M0 7h5.500M144 7h9M148.500 2.500v9" strokeWidth="1.800" />
        <path d="M11 7.500h125" strokeWidth="1.300" />
        <path d="M73.500 1v13" strokeWidth="5" />
      </Svg>
      <span className="-mt-[2px] ml-[17px] w-[36px] text-[14px] text-[#605e5c]">100%</span>
      <Svg w={20} h={16} stroke="#605e5c" className="mr-[20px] ml-[16px]">
        <rect x="1" y="1" width="18" height="14" />
        <path d="M4 7V4h3M13 4h3v3M16 9v3h-3M7 12H4V9" strokeWidth="1.300" />
      </Svg>
    </div>
  );
}

/* ---------- Taskbar ---------- */
const Chrome = () => (
  <>
    <circle cx="15" cy="15" r="14.500" fill="#2aa14b" />
    <path d="M15 15L2.500 7.700A14.500 14.500 0 0 1 27.500 7.700z" fill="#e33b2e" />
    <path d="M15 15l12.500-7.300A14.500 14.500 0 0 1 15 29.500l-1-1z" fill="#fcc31e" />
    <path d="M15 8.300h12.700L15 15z" fill="#e33b2e" />
    <circle cx="15" cy="15" r="6.800" fill="#fff" />
    <circle cx="15" cy="15" r="5.400" fill="#2f7de1" />
  </>
);

const apps = [
  [<><defs><linearGradient id="wn" x1="0" y1="0" x2="1" y2="1"><stop offset="0" stopColor="#7fe3fb" /><stop offset="1" stopColor="#0c8bf0" /></linearGradient></defs><path d="M1 1h13.500v13.500H1zM15.500 1H29v13.500H15.500zM1 15.500h13.500V29H1zM15.500 15.500H29V29H15.500z" fill="url(#wn)" /></>, false],
  [<><rect x="0" y="9" width="22" height="19" rx="1.500" fill="#5d5d5d" /><rect x="7" y="1" width="23" height="20" rx="1.500" fill="#f2f2f2" /><path d="M7 9h15v12H7z" fill="#a9a9a9" /></>, false],
  [<><defs><linearGradient id="eg" x1="0" y1="0" x2="1" y2=".3"><stop offset="0" stopColor="#1f8fe0" /><stop offset=".5" stopColor="#2fc0d8" /><stop offset="1" stopColor="#66e04b" /></linearGradient></defs><path d="M0 15C0 6 7 0 15 0s15 6 15 12c0 5-4 8-8 8-3 0-5-1-4-3 2-4-1-8-6-8C6 9 1 12 0 15z" fill="url(#eg)" /><path d="M0 15c1-4 6-7 11-6-3 2-5 6-4 11 1 4 4 8 9 9.500C7 31 0 24 0 15z" fill="#1175d2" /><path d="M11 12c-4 7 2 16 17 11-3 5-9 8-14 6.500C6 26 6 15 11 12z" fill="#0c4f98" /></>, true],
  [<><path d="M15 4.500h-3a3.200 3.200 0 0 0 0 6.500h3z" fill="#f24e1e" /><path d="M15 4.500h3.200a3.200 3.200 0 0 1 0 6.500H15z" fill="#ff7262" /><path d="M15 11h-3a3.300 3.300 0 0 0 0 6.600h3z" fill="#a259ff" /><circle cx="18.300" cy="14.300" r="3.300" fill="#1abcfe" /><path d="M15 17.600h-3a3.400 3.400 0 1 0 3 3.400z" fill="#0acf83" /></>, false],
  [<><path d="M21 0l8 3.500v23L21 30z" fill="#2ba0ee" /><path d="M21 8L4 21.500 1 19 20 1zM21 22L4 8.500 1 11l19 18z" fill="#1683cf" /></>, true],
  [<><Chrome /><ellipse cx="26" cy="3.500" rx="9.500" ry="9.500" fill="#d9c3a3" /><path d="M20 11c0-5 3-6 4-6-1-5 5-5 4 0 2 0 4 1 4 6-3 3-9 3-12 0z" fill="#30271f" /></>, true],
  [<><path d="M0 4c0-1 .5-2 2-2h8l3 3h14v8H0z" fill="#dc9a0c" /><rect x="0" y="6" width="30" height="22" rx="1.500" fill="#fccf45" /><path d="M5 28v-5c0-1.500 1-2.500 2.500-2.500h15c1.500 0 2.500 1 2.500 2.500v5z" fill="#1479c9" /><path d="M9 24h12" stroke="#0b4f8a" strokeWidth="1.500" /></>, true],
  [<><path d="M13.500 1.500h3L23 24H7z" fill="#f58412" /><path d="M11.800 7h6.400l1.500 4.500h-9.300zM9.500 16h11l1.500 5H8z" fill="#f1f1f1" /><path d="M5 21h3c1 3 13 3 14 0h3l2.500 8h-25z" fill="#f58412" /></>, true],
  [<><ellipse cx="15" cy="15" rx="14" ry="14" fill="#f99420" /><path d="M13 1c9 0 16 6 16 14 0 5-2 9-6 12 3-9 1-18-12-20z" fill="#7a4de8" /><path d="M15 6.500c3 2 5 2.500 8 3 0 8-3 12-8 15-5-3-8-7-8-15 3-.5 5-1 8-3z" fill="#fff" /><circle cx="15" cy="13" r="2.200" fill="#3a3f66" /><path d="M14 13h2v6h-2z" fill="#3a3f66" /></>, true],
  [<><rect x="0" y="4" width="30" height="22" rx="1.500" fill="#4a4a4a" /><path d="M0 4h8v4H0zM22 4h8v4h-8z" fill="#999" /><path d="M8 4h14v4H8z" fill="#c9c9c9" /><path d="M4.500 12l5 4.500-5 4.500M14 20.500h9" stroke="#f2f2f2" strokeWidth="2.500" fill="none" /></>, true],
  [<><path d="M16 1h11v28H16z" fill="#dd9f12" /><path d="M10 8h10v21H10z" fill="#efc02d" /><path d="M3 15.500h10.500V29H3z" fill="#f7de79" /></>, true],
  [<><Chrome /><ellipse cx="25.500" cy="4" rx="9.500" ry="10.500" fill="#06231b" /><path d="M23.500-2v11M28.500 2l-4 4 4 4" stroke="#c9d6d0" strokeWidth="1.300" fill="none" /></>, true],
  [<><defs><linearGradient id="ph" x1="0" y1="0" x2="1" y2="1"><stop offset="0" stopColor="#1c78dc" /><stop offset="1" stopColor="#7b5ac0" /></linearGradient></defs><rect x="2" y="2" width="26" height="26" rx="3" fill="url(#ph)" /><path d="M2 25L15 11c1-1 2-1 3 0l10 12v2c0 2-1 3-3 3H5c-2 0-3-1-3-3z" fill="#36b4ee" /><path d="M5 28l9-9c1-1 2-1 3 0l9 9z" fill="#1b80d8" /><circle cx="21.500" cy="7" r="2.500" fill="#fff" /></>, true],
];

function Taskbar() {
  return (
    <div className="flex h-[58px] border-t border-black bg-[#1c1c1c] text-white">
      <div className="flex w-full border-t border-[#3d3d3d]">
        <div className="ml-[599px] flex shrink-0 grow">
          {apps.map(([icon, dot], i) => (
            <div key={i} className={`flex shrink-0 flex-col items-center pt-[14px] ${i === 0 ? "mr-[2px] w-[55.200px]" : "w-[55.200px]"}`}>
              <svg width="30" height="30" viewBox="0 0 30 30" className="overflow-visible">{icon}</svg>
              {dot && <div className="mt-[5px] h-[4px] w-[8px] rounded-full bg-[#9a9a9a]" />}
            </div>
          ))}
        </div>
        <Svg w={14} h={8} stroke="#fff" sw={1.800} className="mt-[25px]">
          <path d="M1 7l6-6 6 6" />
        </Svg>
        <Svg w={21} h={16} stroke="#fff" sw={1.600} className="mt-[20px] ml-[22px]">
          <path d="M1 5.500c5-5.300 14-5.300 19 0M4 8.800c3.500-3.800 9.500-3.800 13 0M7 12c2-2.200 5-2.200 7 0" />
          <circle cx="10.500" cy="14" r="1.500" fill="#fff" stroke="none" />
        </Svg>
        <Svg w={20} h={15} stroke="#fff" sw={1.400} className="mt-[21px] ml-[9px]">
          <path d="M1 5h3.500L9 1v13L4.500 10H1zM12.500 4.500l6 6M18.500 4.500l-6 6" />
        </Svg>
        <Svg w={21} h={18} stroke="#fff" sw={1.500} className="mt-[19px] ml-[10px]">
          <path d="M10 4.500h6a2 2 0 0 1 2 2v7a2 2 0 0 1-2 2H4a2 2 0 0 1-2-2M19 8v4" />
          <path d="M6 0c4 3 5 9 0 12-7-1-6-8 0-12z" fill="#fff" stroke="none" />
          <path d="M6 6L2 15" />
        </Svg>
        <div className="mt-[8px] mr-[22px] ml-[12px] w-[78px] text-right text-[14.500px] leading-[20px] whitespace-nowrap">
          <div>2:53 PM</div>
          <div>7/27/2025</div>
        </div>
      </div>
    </div>
  );
}

export default function App() {
  return (
    <div className="flex h-[1077px] w-[1918px] flex-col overflow-hidden bg-[#f3f2f1] font-['Open_Sans','Noto_Sans',sans-serif]">
      <TitleBar />
      <Tabs />
      <Ribbon />
      <div className="flex h-[790px]">
        <Rail />
        <Canvas />
        <Filters />
        <Visualizations />
        <DataPane />
      </div>
      <StatusBar />
      <Taskbar />
    </div>
  );
}
